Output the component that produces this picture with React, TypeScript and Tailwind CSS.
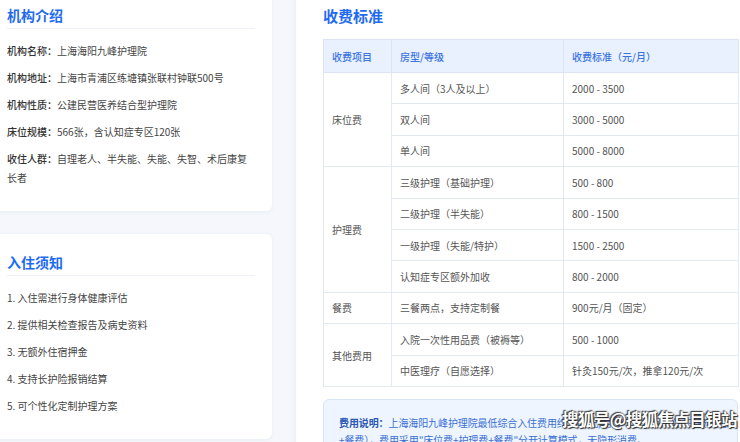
import React from 'react';

const info = [
  { label: '机构名称：', value: '上海海阳九峰护理院' },
  { label: '机构地址：', value: '上海市青浦区练塘镇张联村钟联500号' },
  { label: '机构性质：', value: '公建民营医养结合型护理院' },
  { label: '床位规模：', value: '566张，含认知症专区120张' },
  { label: '收住人群：', value: '自理老人、半失能、失能、失智、术后康复长者' },
];

const notices = [
  '1. 入住需进行身体健康评估',
  '2. 提供相关检查报告及病史资料',
  '3. 无额外住宿押金',
  '4. 支持长护险报销结算',
  '5. 可个性化定制护理方案',
];

const fees = [
  {
    item: '床位费',
    rows: [
      ['多人间（3人及以上）', '2000 - 3500'],
      ['双人间', '3000 - 5000'],
      ['单人间', '5000 - 8000'],
    ],
  },
  {
    item: '护理费',
    rows: [
      ['三级护理（基础护理）', '500 - 800'],
      ['二级护理（半失能）', '800 - 1500'],
      ['一级护理（失能/特护）', '1500 - 2500'],
      ['认知症专区额外加收', '800 - 2000'],
    ],
  },
  { item: '餐费', rows: [['三餐两点，支持定制餐', '900元/月（固定）']] },
  {
    item: '其他费用',
    rows: [
      ['入院一次性用品费（被褥等）', '500 - 1000'],
      ['中医理疗（自愿选择）', '针灸150元/次，推拿120元/次'],
    ],
  },
];

function Card({ title, children }: { title: string; children: React.ReactNode }) {
  return (
    <div className="bg-white rounded-[6px] shadow-[0_1px_4px_rgba(30,60,120,0.06)] pt-[18px] pb-[24px] px-[17px]">
      <h2 className="text-[14px] leading-[20px] font-bold text-[#1f6bf0] pb-[3px] border-b border-[#edf0f5]">
        {title}
      </h2>
      <div className="mt-[12px] flex flex-col gap-[8px]">{children}</div>
    </div>
  );
}

export default function App() {
  return (
    <div className="relative w-[740px] h-[442px] overflow-hidden bg-[#f5f7fc] font-['Noto_Sans_CJK_SC','Noto_Sans',sans-serif]">
      <div className="flex gap-[24px] mt-[-13px] ml-[-10px] items-start">
        <div className="w-[282px] shrink-0 flex flex-col gap-[23px]">
          <Card title="机构介绍">
            {info.map((r) => (
              <p key={r.label} className="text-[10px] leading-[19px] text-[#444]">
                <span className="font-medium text-[#333]">{r.label}</span>
                {r.value}
              </p>
            ))}
          </Card>
          <Card title="入住须知">
            {notices.map((n) => (
              <p key={n} className="text-[10px] leading-[19px] text-[#444]">
                {n}
              </p>
            ))}
          </Card>
        </div>

        <div className="w-[469px] shrink-0 bg-white shadow-[0_1px_6px_rgba(30,60,120,0.07)] pt-[18px] pb-[20px] px-[27px] min-h-[480px]">
          <h2 className="text-[15px] leading-[21px] font-bold text-[#1f6bf0] mb-[13px]">收费标准</h2>
          <table className="w-[415px] border-collapse text-[10px] table-fixed">
            <colgroup>
              <col className="w-[68px]" />
              <col className="w-[172px]" />
              <col className="w-[175px]" />
            </colgroup>
            <thead>
              <tr className="h-[33px] bg-[#e8f1fd]">
                <th className="border border-[#dbe4f0] px-[8px] text-left font-medium text-[#3b74e2]">收费项目</th>
                <th className="border border-[#dbe4f0] px-[8px] text-left font-medium text-[#3b74e2]">房型/等级</th>
                <th className="border border-[#dbe4f0] px-[8px] text-left font-medium text-[#3b74e2]">收费标准（元/月）</th>
              </tr>
            </thead>
            <tbody className="text-[#555]">
              {fees.map((g) =>
                g.rows.map((r, i) => (
                  <tr key={g.item + i} className="h-[31.4px]">
                    {i === 0 && (
                      <td rowSpan={g.rows.length} className="border border-[#e3e9f1] px-[8px]">
                        {g.item}
                      </td>
                    )}
                    <td className="border border-[#e3e9f1] px-[8px]">{r[0]}</td>
                    <td className="border border-[#e3e9f1] px-[8px]">{r[1]}</td>
                  </tr>
                ))
              )}
            </tbody>
          </table>
          <div className="mt-[12px] w-[415px] rounded-[6px] border border-[#d8e5f7] bg-[#eef5fe] pt-[14px] pb-[14px] pl-[15px] pr-[4px] text-[10px] leading-[17px] tracking-[-0.1px] text-[#3b6fd6]">
            <span className="font-bold text-[#2a58b5]">费用说明：</span>
            上海海阳九峰护理院最低综合入住费用约3400元/月起（多人间床位+三级护理+餐费），费用采用"床位费+护理费+餐费"分开计算模式，无隐形消费。
          </div>
        </div>
      </div>

      <div className="absolute left-[562px] top-[406px] text-[16.5px] leading-[26px] font-bold text-white tracking-[-0.6px] [text-shadow:0_0_2px_#333,1px_1px_1px_#222,-1px_-1px_1px_#444]">
        搜狐号@搜狐焦点目银站
      </div>
    </div>
  );
}
